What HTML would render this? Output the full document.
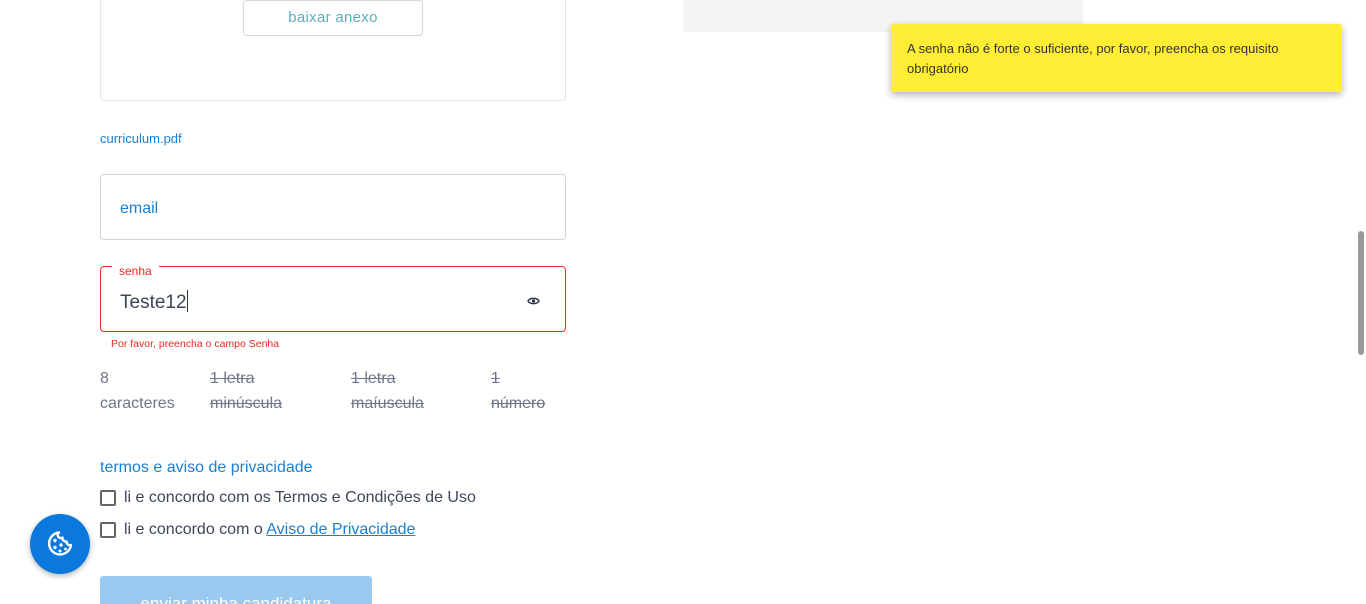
<!DOCTYPE html>
<html><head><meta charset="utf-8"><style>
*{box-sizing:border-box;margin:0;padding:0}
html,body{width:1366px;height:604px;overflow:hidden}
body{background:#fff;font-family:"Liberation Sans",sans-serif;position:relative}
.a{position:absolute}
</style></head><body>
<div class="a" style="left:100px;top:-10px;width:466px;height:111px;border:1px solid #e6e6e6;border-radius:4px"></div>
<div class="a" style="left:243px;top:0;width:180px;height:36px;border:1px solid #d6d6d6;border-radius:4px;color:#5aacc0;font-size:15px;text-align:center;line-height:33px;letter-spacing:0.3px">baixar anexo</div>
<div class="a" style="left:100px;top:131px;font-size:13px;color:#1a7fd4">curriculum.pdf</div>
<div class="a" style="left:100px;top:174px;width:466px;height:66px;border:1px solid #d4d4d4;border-radius:4px"></div>
<div class="a" style="left:120px;top:200px;font-size:16px;color:#1a7fd4">email</div>
<div class="a" style="left:100px;top:266px;width:466px;height:66px;border:1px solid #f0271e;border-radius:4px"></div>
<div class="a" style="left:112px;top:264px;background:#fff;padding:0 7px;font-size:12px;color:#f0271e;line-height:14px">senha</div>
<div class="a" style="left:120px;top:290px;font-size:19px;color:#3d4559">Teste12<span style="display:inline-block;width:1px;height:22px;background:#333;vertical-align:-4px"></span></div>
<svg class="a" style="left:527px;top:296px" width="13" height="10" viewBox="0 0 13 10"><path d="M1 5C3 1.5 10 1.5 12 5C10 8.5 3 8.5 1 5Z" fill="none" stroke="#2d3448" stroke-width="1.4"/><circle cx="6.5" cy="5" r="1.6" fill="#2d3448"/></svg>
<div class="a" style="left:111px;top:338px;font-size:10.5px;color:#f0271e">Por favor, preencha o campo Senha</div>
<div class="a" style="left:100px;top:366px;font-size:16px;color:#6f7689;line-height:25px">8<br>caracteres</div>
<div class="a" style="left:210px;top:366px;font-size:16px;color:#6f7689;line-height:25px;text-decoration:line-through">1 letra<br>minúscula</div>
<div class="a" style="left:351px;top:366px;font-size:16px;color:#6f7689;line-height:25px;text-decoration:line-through">1 letra<br>maíuscula</div>
<div class="a" style="left:491px;top:366px;font-size:16px;color:#6f7689;line-height:25px;text-decoration:line-through">1<br>número</div>
<div class="a" style="left:100px;top:459px;font-size:16px;color:#1a7fd4">termos e aviso de privacidade</div>
<div class="a" style="left:100px;top:490px;width:16px;height:16px;border:2px solid #666;border-radius:2px"></div>
<div class="a" style="left:124px;top:489px;font-size:16px;color:#3d4559">li e concordo com os Termos e Condições de Uso</div>
<div class="a" style="left:100px;top:522px;width:16px;height:16px;border:2px solid #666;border-radius:2px"></div>
<div class="a" style="left:124px;top:521px;font-size:16px;color:#3d4559">li e concordo com o <span style="color:#1a7fd4;text-decoration:underline">Aviso de Privacidade</span></div>
<div class="a" style="left:100px;top:576px;width:272px;height:28px;background:#9ac9f0;border-radius:3px 3px 0 0;overflow:hidden;color:#fff;font-size:17px;text-align:center;line-height:56px">enviar minha candidatura</div>
<div class="a" style="left:30px;top:514px;width:60px;height:60px;border-radius:50%;background:#0b78dc;box-shadow:0 2px 6px rgba(0,0,0,.3)"></div>
<svg class="a" style="left:44px;top:528px" width="32" height="32" viewBox="0 0 32 32"><path d="M15 4.5A11 11 0 1 0 27 17 3.5 3.5 0 0 1 22.5 13.5 3.5 3.5 0 0 1 18.5 9.5 3 3 0 0 1 15 4.5Z" fill="none" stroke="#fff" stroke-width="2.4" stroke-linejoin="round"/><circle cx="11" cy="12.5" r="1.7" fill="#fff"/><circle cx="17" cy="17" r="1.7" fill="#fff"/><circle cx="11" cy="19.5" r="1.7" fill="#fff"/><circle cx="16" cy="23" r="1.5" fill="#fff"/><circle cx="21.5" cy="21" r="1.4" fill="#fff"/></svg>
<div class="a" style="left:683px;top:0;width:400px;height:32px;background:#f4f4f4"></div>
<div class="a" style="left:891px;top:24px;width:451px;height:68px;background:#ffee33;border-radius:3px;box-shadow:0 3px 8px rgba(0,0,0,.3);padding:15px 16px;font-size:13px;line-height:20px;color:#333">A senha não é forte o suficiente, por favor, preencha os requisito obrigatório</div>
<div class="a" style="left:1358px;top:231px;width:6px;height:124px;background:#999;border-radius:3px"></div>
</body></html>
